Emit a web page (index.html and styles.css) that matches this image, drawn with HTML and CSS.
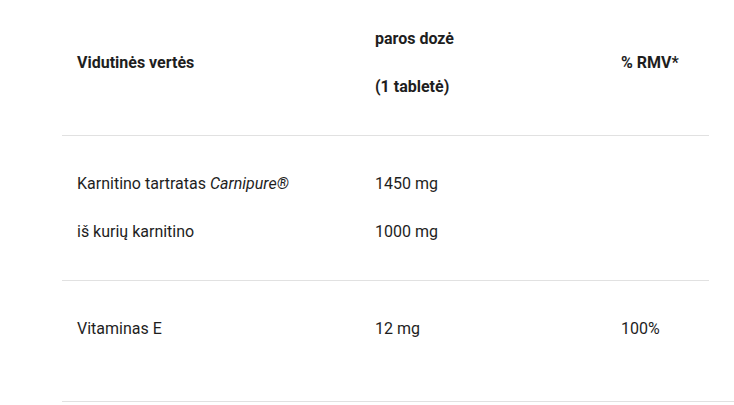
FILE: index.html
```html
<!DOCTYPE html>
<html lang="lt">
<head>
<meta charset="utf-8">
<title>Maistinė vertė</title>
<link rel="stylesheet" href="styles.css">
</head>
<body>
<div class="wrap">
  <table class="nutrition">
    <colgroup>
      <col class="c1"><col class="c2"><col class="c3">
    </colgroup>
    <thead>
      <tr class="head">
        <th><p>Vidutinės vertės</p></th>
        <th><p>paros dozė</p><p>(1 tabletė)</p></th>
        <th><p>% RMV*</p></th>
      </tr>
    </thead>
    <tbody>
      <tr class="row">
        <td><p>Karnitino tartratas <em>Carnipure®</em></p><p>iš kurių karnitino</p></td>
        <td><p>1450 mg</p><p>1000 mg</p></td>
        <td></td>
      </tr>
      <tr class="row last">
        <td><p>Vitaminas E</p></td>
        <td><p>12 mg</p></td>
        <td><p>100%</p></td>
      </tr>
    </tbody>
  </table>
  <div class="rule"></div>
</div>
</body>
</html>
```
FILE: styles.css
```css
html, body {
  margin: 0;
  padding: 0;
  background: #fff;
}
body {
  font-family: Roboto, "Liberation Sans", Arial, sans-serif;
  font-size: 16px;
  color: #1e1e1e;
}
.wrap {
  padding-left: 62px;
}
.nutrition {
  width: 647px;
  border-collapse: collapse;
  table-layout: fixed;
}
.c1 { width: 298px; }
.c2 { width: 246px; }
.c3 { width: 103px; }
.nutrition th,
.nutrition td {
  text-align: left;
  vertical-align: middle;
  padding: 12px 15px 12px;
}
.nutrition th {
  font-weight: 700;
}
.nutrition p {
  margin: 24px 0;
  line-height: 24px;
}
.head th {
  padding-top: 3px;
  padding-bottom: 12px;
}
.head,
.row {
  border-bottom: 1px solid #e1e1e1;
}
.row.last {
  border-bottom: none;
}
.row.last td {
  padding-bottom: 36px;
}
.rule {
  border-top: 1px solid #e1e1e1;
}
```
